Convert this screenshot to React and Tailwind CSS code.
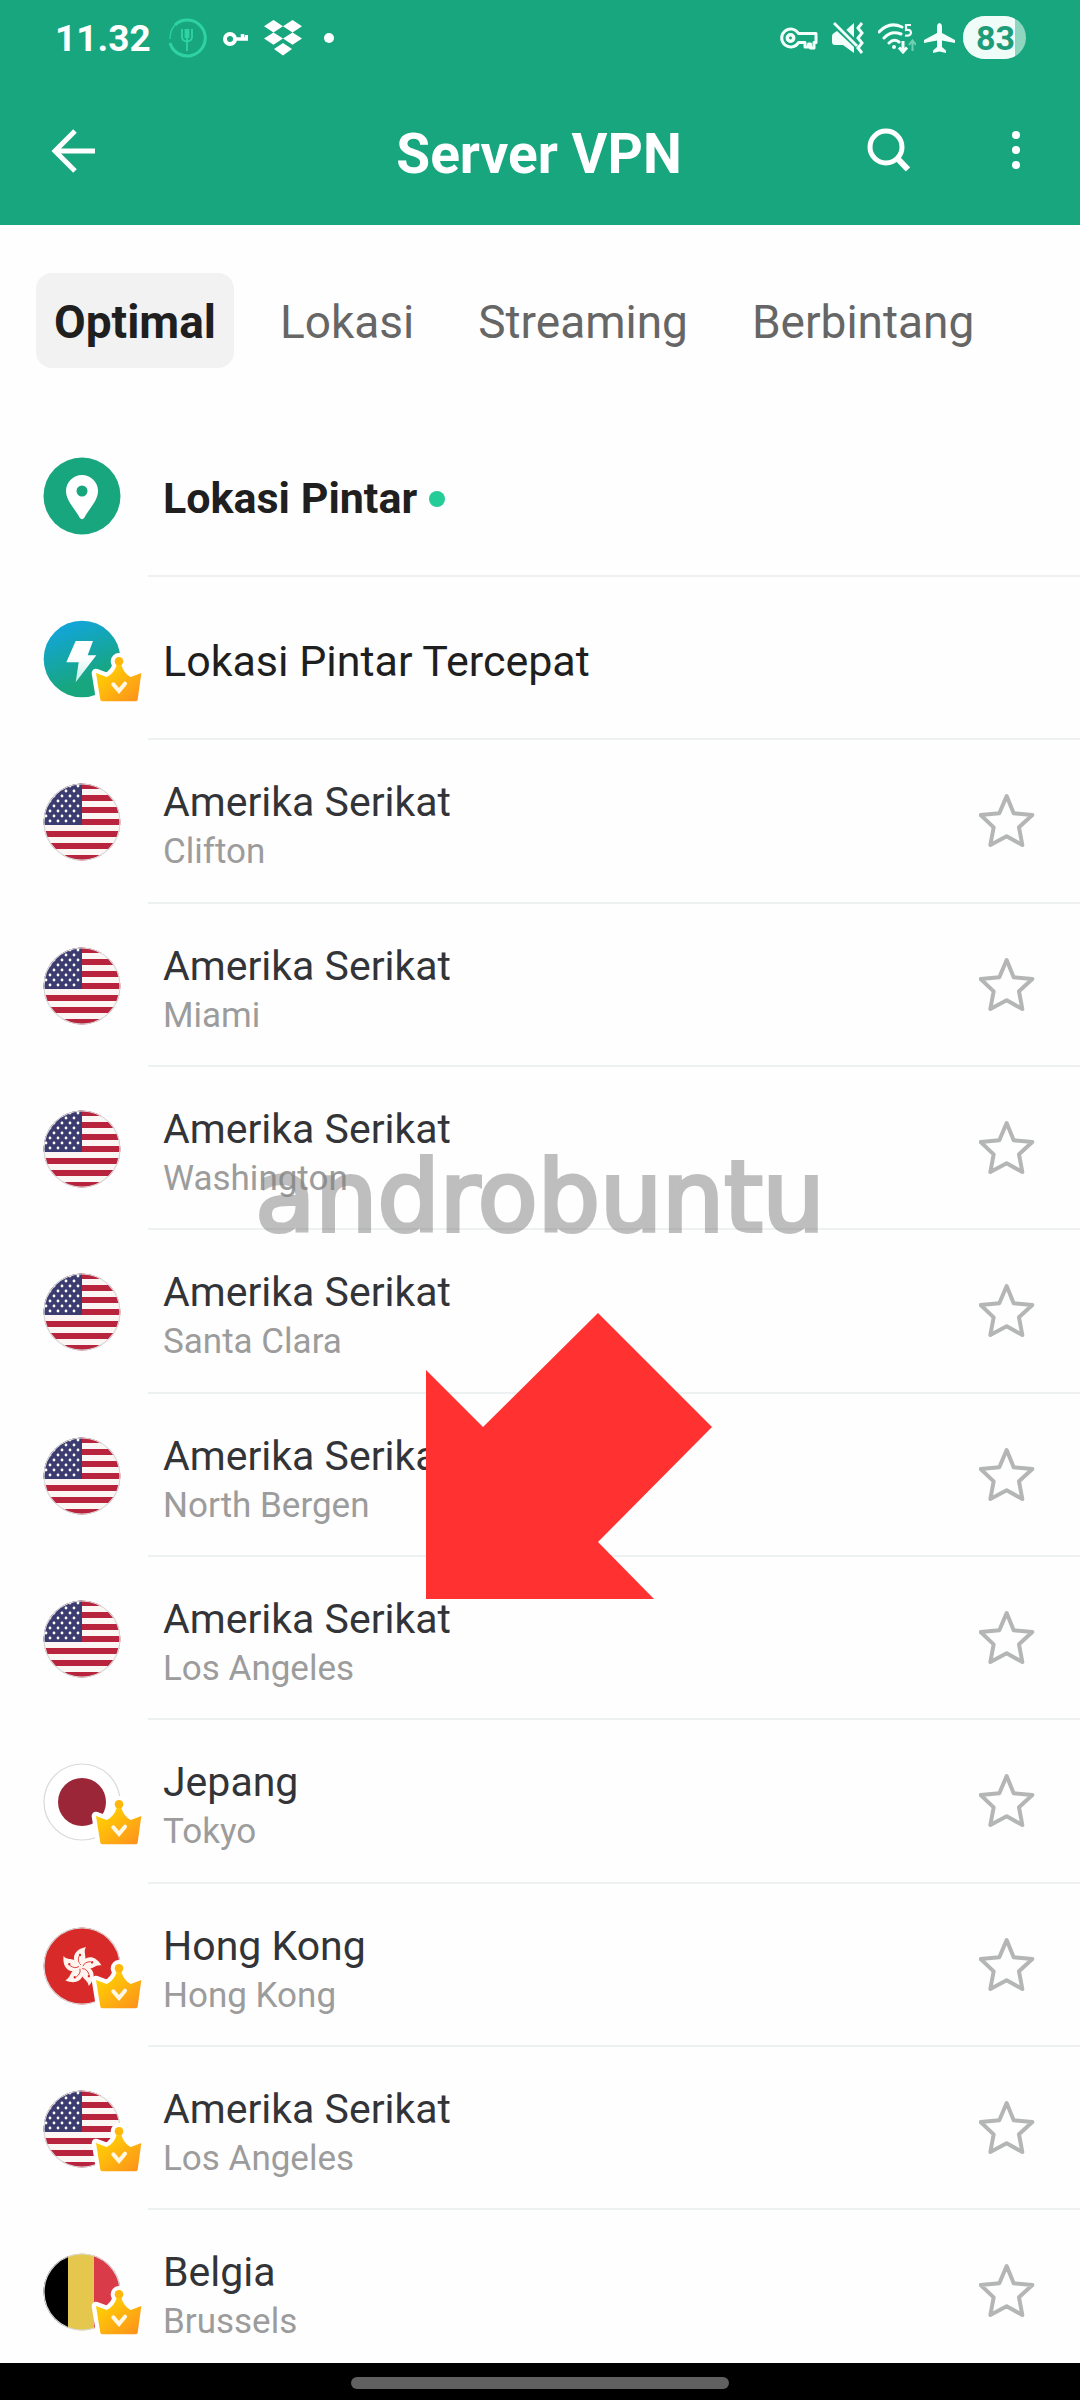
import { useState } from "react";

const TABS = ["Optimal", "Lokasi", "Streaming", "Berbintang"];

const SERVERS = [
  { id: 1, country: "Amerika Serikat", city: "Clifton", flag: "us" },
  { id: 2, country: "Amerika Serikat", city: "Miami", flag: "us" },
  { id: 3, country: "Amerika Serikat", city: "Washington", flag: "us" },
  { id: 4, country: "Amerika Serikat", city: "Santa Clara", flag: "us" },
  { id: 5, country: "Amerika Serikat", city: "North Bergen", flag: "us" },
  { id: 6, country: "Amerika Serikat", city: "Los Angeles", flag: "us" },
  { id: 7, country: "Jepang", city: "Tokyo", flag: "jp", premium: true },
  { id: 8, country: "Hong Kong", city: "Hong Kong", flag: "hk", premium: true },
  { id: 9, country: "Amerika Serikat", city: "Los Angeles", flag: "us", premium: true },
  { id: 10, country: "Belgia", city: "Brussels", flag: "be", premium: true },
];

const STRIPES = [0, 12, 24, 36, 48, 60, 72];
const STAR_ROWS = [3, 8, 13, 18, 23, 28, 33, 38];
const STAR_COLS = [3, 11, 19, 27, 35];
const PETALS = [0, 72, 144, 216, 288];

const FlagArt = ({ code }) => {
  if (code === "us") {
    return (
      <>
        <rect width="78" height="78" fill="#fbf6f4" />
        {STRIPES.map((y) => (
          <rect key={y} y={y} width="78" height="6" fill="#b8243d" />
        ))}
        <rect width="39" height="42" fill="#3d3c70" />
        {STAR_ROWS.map((y, i) =>
          STAR_COLS.map((x) => (
            <circle key={`${x}-${y}`} cx={i % 2 ? x - 4 : x} cy={y} r="1.4" fill="#fff" />
          ))
        )}
      </>
    );
  }
  if (code === "jp") {
    return (
      <>
        <rect width="78" height="78" fill="#fff" />
        <circle cx="39" cy="39" r="24" fill="#9b2638" />
      </>
    );
  }
  if (code === "hk") {
    return (
      <>
        <rect width="78" height="78" fill="#d92a2a" />
        {PETALS.map((a) => (
          <g key={a} transform={`translate(38 40) rotate(${a})`}>
            <path d="M0 0C-10 -4 -10 -17 5 -20C1 -14 9 -7 0 0Z" fill="#fff4ee" />
            <path d="M0 -2Q-4 -5 -2 -11" fill="none" stroke="#d92a2a" strokeWidth="0.8" />
            <circle cx="-1" cy="-12" r="1.2" fill="#d92a2a" />
          </g>
        ))}
      </>
    );
  }
  return (
    <>
      <rect width="26" height="78" fill="#000" />
      <rect x="25" width="27" height="78" fill="#e5c74e" />
      <rect x="51" width="27" height="78" fill="#da3b49" />
    </>
  );
};

const Flag = ({ code, id }) => (
  <svg viewBox="0 0 78 78" className="block size-[78px]" aria-hidden="true">
    <clipPath id={`flag-${id}`}>
      <circle cx="39" cy="39" r="38.5" />
    </clipPath>
    <g clipPath={`url(#flag-${id})`}>
      <FlagArt code={code} />
    </g>
    <circle cx="39" cy="39" r="38" fill="none" stroke="#d9d9d9" strokeWidth="1.2" />
  </svg>
);

const Crown = ({ id }) => (
  <svg viewBox="0 0 156 156" className="absolute left-[47px] top-[33px] size-[52px]" aria-hidden="true">
    <defs>
      <linearGradient id={`gold-${id}`} x1="0" y1="0" x2="1" y2="1">
        <stop offset="0.2" stopColor="#ffcb05" />
        <stop offset="0.9" stopColor="#fd961a" />
      </linearGradient>
    </defs>
    <g fill="#fff" stroke="#fff" strokeWidth="26" strokeLinejoin="round">
      <circle cx="87" cy="25" r="12" />
      <path d="M18 60L50 72Q72 62 80 36H94Q102 62 122 72L154 60L143 140Q142 145 136 145H38Q32 145 31 140Z" />
    </g>
    <circle cx="87" cy="25" r="13" fill="#ffb70c" />
    <path
      d="M18 60L50 72Q72 62 80 36H94Q102 62 122 72L154 60L143 140Q142 145 136 145H38Q32 145 31 140Z"
      fill={`url(#gold-${id})`}
    />
    <path d="M70 94L87 114L105 92" fill="none" stroke="#fff8e6" strokeWidth="12" strokeLinecap="round" />
  </svg>
);

const PinIcon = () => (
  <svg viewBox="0 0 78 78" className="block size-[78px]" aria-hidden="true">
    <circle cx="39" cy="39" r="38.5" fill="#17a67e" />
    <path
      d="M39 18A16 16 0 0 0 23 34C23 44 33 53 36.500 60.500Q39 64 41.500 60.500C45 53 55 44 55 34A16 16 0 0 0 39 18Z"
      fill="#fff"
    />
    <circle cx="39" cy="34" r="5.500" fill="#17a67e" />
  </svg>
);

const BoltIcon = () => (
  <svg viewBox="0 0 234 234" className="block size-[78px]" aria-hidden="true">
    <defs>
      <linearGradient id="bolt-bg" x1="0.2" y1="0" x2="0.6" y2="1">
        <stop offset="0.05" stopColor="#12a5dc" />
        <stop offset="0.8" stopColor="#17a67e" />
      </linearGradient>
      <linearGradient id="bolt-fg" x1="0" y1="0" x2="0" y2="1">
        <stop offset="0.4" stopColor="#fff" />
        <stop offset="1" stopColor="#bfeee6" />
      </linearGradient>
    </defs>
    <circle cx="117" cy="117" r="115" fill="url(#bolt-bg)" />
    <path d="M98 63H150L134 106H160L98 187L107 127H70Z" fill="url(#bolt-fg)" />
  </svg>
);

const StatusBar = () => (
  <div className="flex h-[75px] items-center justify-between pl-[55px] pr-[54px]">
    <div className="flex items-center gap-4">
      <span className="pt-0.5 text-[37px] font-bold leading-none">11.32</span>
      <svg viewBox="0 0 40 40" className="size-10" fill="none" stroke="#2fd3a3" aria-hidden="true">
        <path d="M3 25A18 18 0 1 0 20 2Q13 2 8 7" strokeWidth="3" />
        <path d="M3 21Q3 12 8 7" strokeWidth="1.200" />
        <path d="M15 11V19Q15 23 20 23.500Q25 23 25 19V11M20 11V33M18.500 11V20M21.500 11V20" strokeWidth="1.800" />
      </svg>
      <svg viewBox="0 0 25 16" className="h-4 w-[25px]" fill="none" stroke="#fff" aria-hidden="true">
        <circle cx="7" cy="9" r="5" strokeWidth="4" />
        <path d="M12 9H25M19.500 9V4M23.500 9V5" strokeWidth="3.500" />
      </svg>
      <svg viewBox="0 0 38 36" className="h-9 w-[38px]" fill="#fff" aria-hidden="true">
        <path d="M9.500 0L19 6.200L9.500 12.400L0 6.200ZM28.500 0L38 6.200L28.500 12.400L19 6.200ZM9.500 12.400L19 18.600L9.500 24.800L0 18.600ZM28.500 12.400L38 18.600L28.500 24.800L19 18.600ZM19 23L28 29L19 35.500L10 29Z" />
      </svg>
      <span className="ml-1.5 size-[10px] rounded-full bg-white" />
    </div>

    <div className="flex items-center gap-2">
      <svg viewBox="0 0 38 26" className="h-[26px] w-[38px]" fill="none" stroke="#f3fffa" strokeWidth="3.500" strokeLinejoin="round" aria-hidden="true">
        <path d="M18.500 8.500A9 9 0 1 0 18.500 17.500H25V22H28.500V19H30.500V23H34V17.500H36V8.500Z" strokeWidth="3" />
        <circle cx="10.500" cy="13" r="3.200" />
      </svg>
      <svg viewBox="0 0 44 32" className="h-8 w-11" aria-hidden="true">
        <path d="M6 14Q6 12 8 11L11 9L28 25V31L17 23H9Q6 23 6 20Z" fill="#f3fffa" />
        <path d="M19 9L28 1V18Z" fill="#f3fffa" />
        <path d="M10 1L31 22" stroke="#17a67e" strokeWidth="5" />
        <path d="M8 1L31 24" stroke="#f3fffa" strokeWidth="2.800" />
        <path d="M36 1L32 6L36 11L32 16L36 21L32 26L36 31" fill="none" stroke="#f3fffa" strokeWidth="3" />
      </svg>
      <svg viewBox="0 0 38 32" className="h-8 w-[38px]" fill="none" stroke="#f3fffa" strokeWidth="3" aria-hidden="true">
        <path d="M1 10Q11 -1 24 5M6 16Q13 8 23 12M11 21Q16 16 21 20" strokeLinecap="round" />
        <circle cx="16" cy="25" r="2" fill="#f3fffa" stroke="none" />
        <path d="M33 3H28V8Q33 7 33 11Q32 14.500 27 13.500" strokeWidth="2.200" />
        <path d="M25 19V29M21 25.500L25 30L29 25.500" />
        <path d="M34.500 29V19M31 23L34.500 18.500L38 23" stroke="#6fd0b2" strokeWidth="2" />
      </svg>
      <svg viewBox="0 0 31 32" className="h-8 w-[31px]" fill="#f3fffa" aria-hidden="true">
        <path d="M15.500 1Q18 1.500 18 5V11L31 18V21L18 18.500V25L22 28.500V31L15.500 29.500L9 31V28.500L13 25V18.500L0 21V18L13 11V5Q13 1.500 15.500 1Z" />
      </svg>
      <div className="flex h-[43px] w-[63px] items-center overflow-hidden rounded-full bg-[#8fd6c0]">
        <span className="flex h-full w-[52px] items-center justify-end bg-[#f0fcf8] text-[34px] font-bold leading-none text-[#1c9c78]">
          83
        </span>
      </div>
    </div>
  </div>
);

const ServerRow = ({ server, starred, onStar }) => (
  <li className="group flex h-[163px] nth-[3n]:h-[164px]">
    <div className="flex w-[105px] shrink-0 items-center">
      <div className="relative">
        <Flag code={server.flag} id={server.id} />
        {server.premium ? <Crown id={server.id} /> : null}
      </div>
    </div>
    <div className="flex flex-1 items-center justify-between border-b-2 border-[#edf1f1] pl-[15px] pr-[45px] group-last:border-transparent">
      <div className="pt-2">
        <div className="text-[41px] leading-[54px] text-[#333438]">{server.country}</div>
        <div className="text-[35px] leading-[46px] text-[#9c9c9c]">{server.city}</div>
      </div>
      <button type="button" aria-label={`Bintangi ${server.city}`} aria-pressed={starred} onClick={onStar}>
        <svg viewBox="0 0 168 168" className="block size-14" aria-hidden="true">
          <path
            d="M83 9L104 61L160 66L120 103L130 156L83 130L34 156L44 103L5 66L61 61Z"
            fill={starred ? "#b3b6b5" : "none"}
            stroke="#b3b6b5"
            strokeWidth="12"
            strokeLinejoin="round"
          />
        </svg>
      </button>
    </div>
  </li>
);

const App = () => {
  const [tab, setTab] = useState("Optimal");
  const [stars, setStars] = useState(() => new Set());

  const toggleStar = (id) => {
    setStars((prev) => {
      const next = new Set(prev);
      if (next.has(id)) next.delete(id);
      else next.add(id);
      return next;
    });
  };

  return (
    <div className="min-h-screen bg-[#fefefe] font-[Roboto,sans-serif]">
      <header className="bg-[#17a67e] text-white">
        <StatusBar />
        <div className="grid h-[150px] grid-cols-[1fr_auto_1fr] items-center pl-[50px] pr-[52px]">
          <button type="button" aria-label="Kembali" className="justify-self-start">
            <svg viewBox="0 0 46 46" className="block size-[46px]" fill="none" stroke="#fff" strokeWidth="5" aria-hidden="true">
              <path d="M25 4L5 24L25 44M5 24H45" />
            </svg>
          </button>
          <h1 className="pt-2 text-[55px] font-bold leading-none">Server VPN</h1>
          <div className="flex items-center gap-[94px] justify-self-end">
            <button type="button" aria-label="Cari">
              <svg viewBox="0 0 44 44" className="block size-11" fill="none" stroke="#fff" strokeWidth="5" aria-hidden="true">
                <circle cx="20" cy="19" r="16" />
                <path d="M31 30L42 41.500" strokeWidth="6" />
              </svg>
            </button>
            <button type="button" aria-label="Menu lainnya" className="flex w-6 flex-col items-center gap-[7px]">
              <span className="size-2 rounded-full bg-white" />
              <span className="size-2 rounded-full bg-white" />
              <span className="size-2 rounded-full bg-white" />
            </button>
          </div>
        </div>
      </header>

      <nav className="flex gap-7 px-9 pb-[46px] pt-12">
        {TABS.map((name) => (
          <button
            key={name}
            type="button"
            onClick={() => setTab(name)}
            className={
              tab === name
                ? "h-[95px] rounded-2xl bg-[#f2f2f3] px-[18px] pt-1 text-[46px] font-bold text-[#1f1f1f]"
                : "h-[95px] rounded-2xl px-[18px] pt-1 text-[46px] text-[#666]"
            }
          >
            {name}
          </button>
        ))}
      </nav>

      <main className="relative">
        <ul className="pl-[43px]">
          <li className="flex h-[163px]">
            <div className="flex w-[105px] shrink-0 items-center">
              <PinIcon />
            </div>
            <div className="flex flex-1 items-center gap-3 border-b-2 border-[#edf1f1] pl-[15px] pt-2">
              <span className="text-[43px] font-bold text-[#1f1f1f]">Lokasi Pintar</span>
              <span className="size-4 rounded-full bg-[#25cc98]" />
            </div>
          </li>
          <li className="flex h-[163px]">
            <div className="flex w-[105px] shrink-0 items-center">
              <div className="relative">
                <BoltIcon />
                <Crown id="smart" />
              </div>
            </div>
            <div className="flex flex-1 items-center border-b-2 border-[#edf1f1] pl-[15px] pt-2">
              <span className="text-[43px] text-[#1f1f1f]">Lokasi Pintar Tercepat</span>
            </div>
          </li>
          {SERVERS.map((s) => (
            <ServerRow key={s.id} server={s} starred={stars.has(s.id)} onStar={() => toggleStar(s.id)} />
          ))}
        </ul>

        <div className="pointer-events-none absolute inset-x-0 top-[726px] text-center font-[DejaVu_Sans,sans-serif] text-[98px] leading-[114px] text-[#7f7f7f] opacity-50 [-webkit-text-stroke:4px_#7f7f7f]">
          androbuntu
        </div>
        <svg
          viewBox="0 0 286 286"
          className="pointer-events-none absolute left-[426px] top-[899px] size-[286px]"
          aria-hidden="true"
        >
          <path d="M172 0L286 114L172 229L228 286H0V57L57 114Z" fill="#ff3131" />
        </svg>
      </main>

      <footer className="fixed inset-x-0 bottom-0 flex h-[37px] justify-center bg-black pt-[14px]">
        <div className="h-3 w-[35%] rounded-full bg-[#606060]" />
      </footer>
    </div>
  );
};

export default App;
